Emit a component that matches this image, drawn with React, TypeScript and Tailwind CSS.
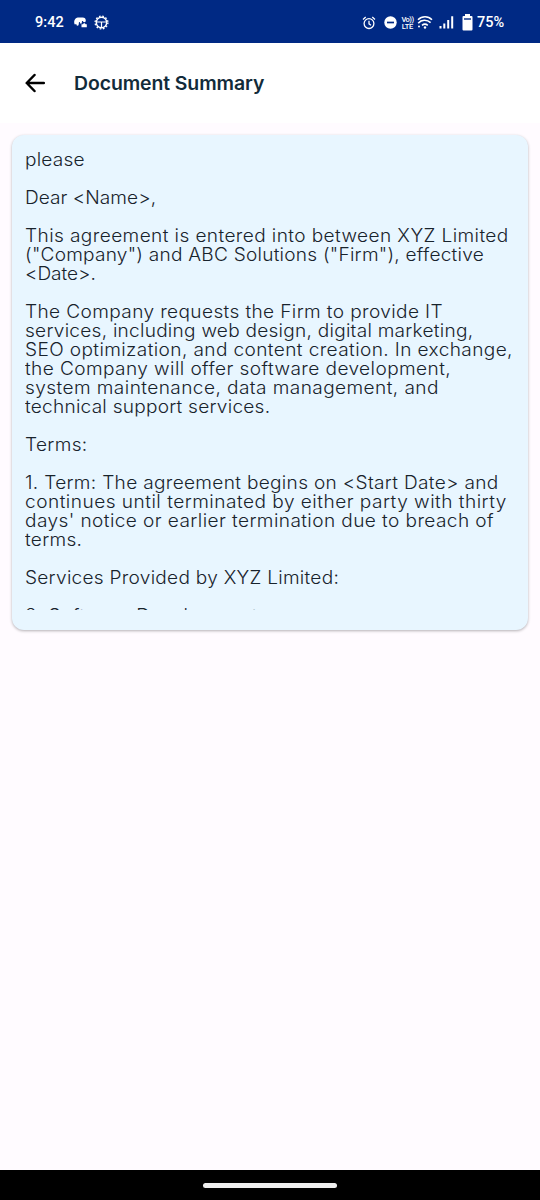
type Line = { text: string; tracking: string };

const paragraphs: Line[][] = [
  [{ text: "please", tracking: "tracking-[0.19px]" }],
  [{ text: "Dear <Name>,", tracking: "tracking-[0.03px]" }],
  [
    { text: "This agreement is entered into between XYZ Limited", tracking: "tracking-[0.37px]" },
    { text: '("Company") and ABC Solutions ("Firm"), effective', tracking: "tracking-[0.22px]" },
    { text: "<Date>.", tracking: "tracking-[-0.05px]" },
  ],
  [
    { text: "The Company requests the Firm to provide IT", tracking: "tracking-[0.35px]" },
    { text: "services, including web design, digital marketing,", tracking: "tracking-[0.23px]" },
    { text: "SEO optimization, and content creation. In exchange,", tracking: "tracking-[0.36px]" },
    { text: "the Company will offer software development,", tracking: "tracking-[0.38px]" },
    { text: "system maintenance, data management, and", tracking: "tracking-[0.39px]" },
    { text: "technical support services.", tracking: "tracking-[0.22px]" },
  ],
  [{ text: "Terms:", tracking: "tracking-[0.3px]" }],
  [
    { text: "1. Term: The agreement begins on <Start Date> and", tracking: "tracking-[0.29px]" },
    { text: "continues until terminated by either party with thirty", tracking: "tracking-[0.45px]" },
    { text: "days' notice or earlier termination due to breach of", tracking: "tracking-[0.38px]" },
    { text: "terms.", tracking: "tracking-[0.28px]" },
  ],
  [{ text: "Services Provided by XYZ Limited:", tracking: "tracking-[0.24px]" }],
  [{ text: "2. Software Development:", tracking: "tracking-[0.34px]" }],
];

function StatusBar() {
  return (
    <div className="flex h-[43px] shrink-0 items-center bg-[#002984] pt-[2px] pr-[35px] pl-[35px] font-['Roboto',sans-serif] text-[14.5px] font-medium text-white">
      <span className="w-[38px] tracking-[0.1px]">9:42</span>
      <svg className="h-[11px] w-[15px]" viewBox="0 0 15 11" fill="white">
        <path d="M1.8 7.5C.8 6 1 3.5 2.2 2 3.3.7 5 .5 6.5.6h3.2c2 0 3.1 1.2 3.1 3.2 0 .9-.5 1.4-1.3 1.4S10 4.8 9.8 4H9L8.7 6.5H7L6.8 5H6l-.4 3c-.2 1-1.8 1.2-2.1.1L3.3 7z" />
        <path d="M8.5 7.2H10l.7-.9h1.2l.7.9h1.2v3.1H8.5z" />
      </svg>
      <svg className="ml-[6px] h-[15px] w-[15px]" viewBox="0 0 15 15" fill="none" stroke="white">
        <circle cx="7.5" cy="7.5" r="5.2" strokeWidth="1.4" />
        <circle cx="7.5" cy="7.5" r="6.4" strokeWidth="1.3" strokeDasharray="1.7 1.65" />
        <path d="M2.5 7h10M7.5 7v5.5" strokeWidth="1.2" />
      </svg>
      <div className="ml-auto flex items-center">
        <svg className="h-[14px] w-[14px]" viewBox="0 0 14 14" fill="none" stroke="white" strokeWidth="1.3">
          <circle cx="7" cy="7.6" r="4.9" />
          <path d="M7 4.8v3l2 1.4M1 3.4 3.7 1M13 3.4 10.3 1" />
        </svg>
        <svg className="ml-[8px] h-[13px] w-[13px]" viewBox="0 0 13 13">
          <circle cx="6.5" cy="6.5" r="6.2" fill="white" />
          <path d="M3 6.5h7" stroke="#002984" strokeWidth="1.7" />
        </svg>
        <div className="ml-[4px] flex w-[13px] flex-col items-center text-[7.5px] leading-[7px] font-medium">
          <span className="tracking-[-0.5px]">Vo))</span>
          <span className="tracking-[-0.2px]">LTE</span>
        </div>
        <svg className="ml-[3px] h-[13px] w-[16px]" viewBox="0 0 16 13" fill="none" stroke="white" strokeWidth="1.6">
          <path d="M1 3.8C5-.2 11-.2 15 3.8M1.2 7.2C4.5 3.5 10 3.4 13.6 6.7M5 9.4c1.8-1.5 4-1.5 5.8 0" />
          <circle cx="8" cy="11.5" r="1.2" fill="white" stroke="none" />
          <circle cx="2" cy="10.6" r="1" fill="white" stroke="none" />
        </svg>
        <svg className="ml-[6px] h-[13px] w-[15px]" viewBox="0 0 15 13" fill="white">
          <path d="M.5 10h2v2.5h-2zM4.3 7.5h2v5h-2zM8.2 4h2v8.5h-2zM12.2.3h2v12.2h-2z" />
        </svg>
        <svg className="ml-[8px] h-[17px] w-[11px]" viewBox="0 0 11 17" fill="white">
          <path d="M3 0h5v2h1.5q1 0 1 1v12.5q0 1-1 1h-8q-1 0-1-1V3q0-1 1-1H3z" />
          <path d="M2 5h7" stroke="#002984" strokeWidth="1.4" />
        </svg>
        <span className="ml-[4px] w-[28px] text-[14.5px] whitespace-nowrap">75%</span>
      </div>
    </div>
  );
}

function Header() {
  return (
    <header className="flex h-[80px] shrink-0 items-center bg-white pl-[25px]">
      <svg className="h-5 w-5" viewBox="0 0 20 20" fill="none" stroke="black" strokeWidth="2.5" strokeLinecap="round" strokeLinejoin="round">
        <path d="M9.5 2 1.7 10l7.8 8M1.8 10h17" />
      </svg>
      <h1 className="mt-px ml-[29px] origin-left scale-x-105 text-[18.5px] font-semibold tracking-[-0.09px] whitespace-nowrap text-[#122b3a]">Document Summary</h1>
    </header>
  );
}

export default function App() {
  return (
    <div className="flex h-[1200px] w-[540px] flex-col overflow-hidden bg-[#fffbff] font-['Inter',sans-serif]">
      <StatusBar />
      <Header />
      <main className="flex-1 px-3 pt-3">
        <article className="h-[495px] rounded-xl bg-[#e8f6ff] px-[13px] pt-[15px] shadow-[0_1px_3px_rgba(0,0,0,0.3)]">
          <div className="h-[460px] origin-left scale-x-[1.06] overflow-hidden text-[18px] leading-[19px] font-light whitespace-nowrap text-[#18232c]">
            {paragraphs.map((lines) => (
              <p key={lines[0].text} className="mb-[19px]">
                {lines.map((line) => (
                  <span key={line.text} className={`block ${line.tracking}`}>{line.text}</span>
                ))}
              </p>
            ))}
          </div>
        </article>
      </main>
      <footer className="flex h-[30px] shrink-0 items-center justify-center bg-black">
        <div className="h-[5px] w-[134px] rounded-full bg-[#eeeeee]" />
      </footer>
    </div>
  );
}
